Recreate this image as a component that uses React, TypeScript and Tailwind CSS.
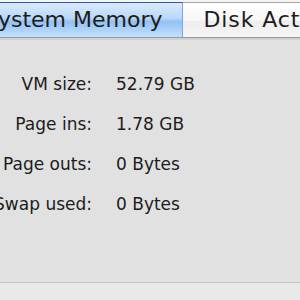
const rows = [
  { label: 'VM size:', value: '52.79 GB' },
  { label: 'Page ins:', value: '1.78 GB' },
  { label: 'Page outs:', value: '0 Bytes' },
  { label: 'Swap used:', value: '0 Bytes' },
];

export default function App() {
  return (
    <div className="w-[300px] h-[300px] overflow-hidden flex flex-col bg-[#e1e1e1] text-[#1c1c1c] font-['DejaVu_Sans',sans-serif]">
      {/* tab strip */}
      <div className="h-[40px] shrink-0 flex flex-col bg-[#f2f2f2]">
        <div className="h-[2px] bg-[#f4f4f4]" />
        <div className="flex h-[35px] whitespace-nowrap text-[22px] leading-none">
          <div className="ml-[-38px] flex items-center pl-[22px] pr-[19px] border-t border-[#2f57a8] border-r border-r-[#7fa6d6] bg-[linear-gradient(to_bottom,#d9eafd,#b9d8f9_45%,#92c2f3_55%,#c2e0fd)]">
            System Memory
          </div>
          <div className="flex-1 flex items-center pl-[21px] tracking-[0.9px] border-t border-[#a6a6a6] bg-[linear-gradient(to_bottom,#ffffff,#f7f7f7_50%,#ededed_55%,#f6f6f6)]">
            Disk Activity
          </div>
        </div>
        <div className="h-[1px] bg-[#9a9a9a]" />
        <div className="h-[2px] bg-[#d2d2d2]" />
      </div>

      {/* memory stats */}
      <div className="flex-1 pt-[24px] text-[17px] leading-[40px]">
        {rows.map((r) => (
          <div key={r.label} className="flex whitespace-nowrap">
            <div className="w-[92px] shrink-0 flex justify-end">
              <span>{r.label}</span>
            </div>
            <span className="ml-[24px]">{r.value}</span>
          </div>
        ))}
      </div>

      <div className="h-[18px] shrink-0 border-t border-[#c4c4c4] bg-[#e9e9e9]" />
    </div>
  );
}
